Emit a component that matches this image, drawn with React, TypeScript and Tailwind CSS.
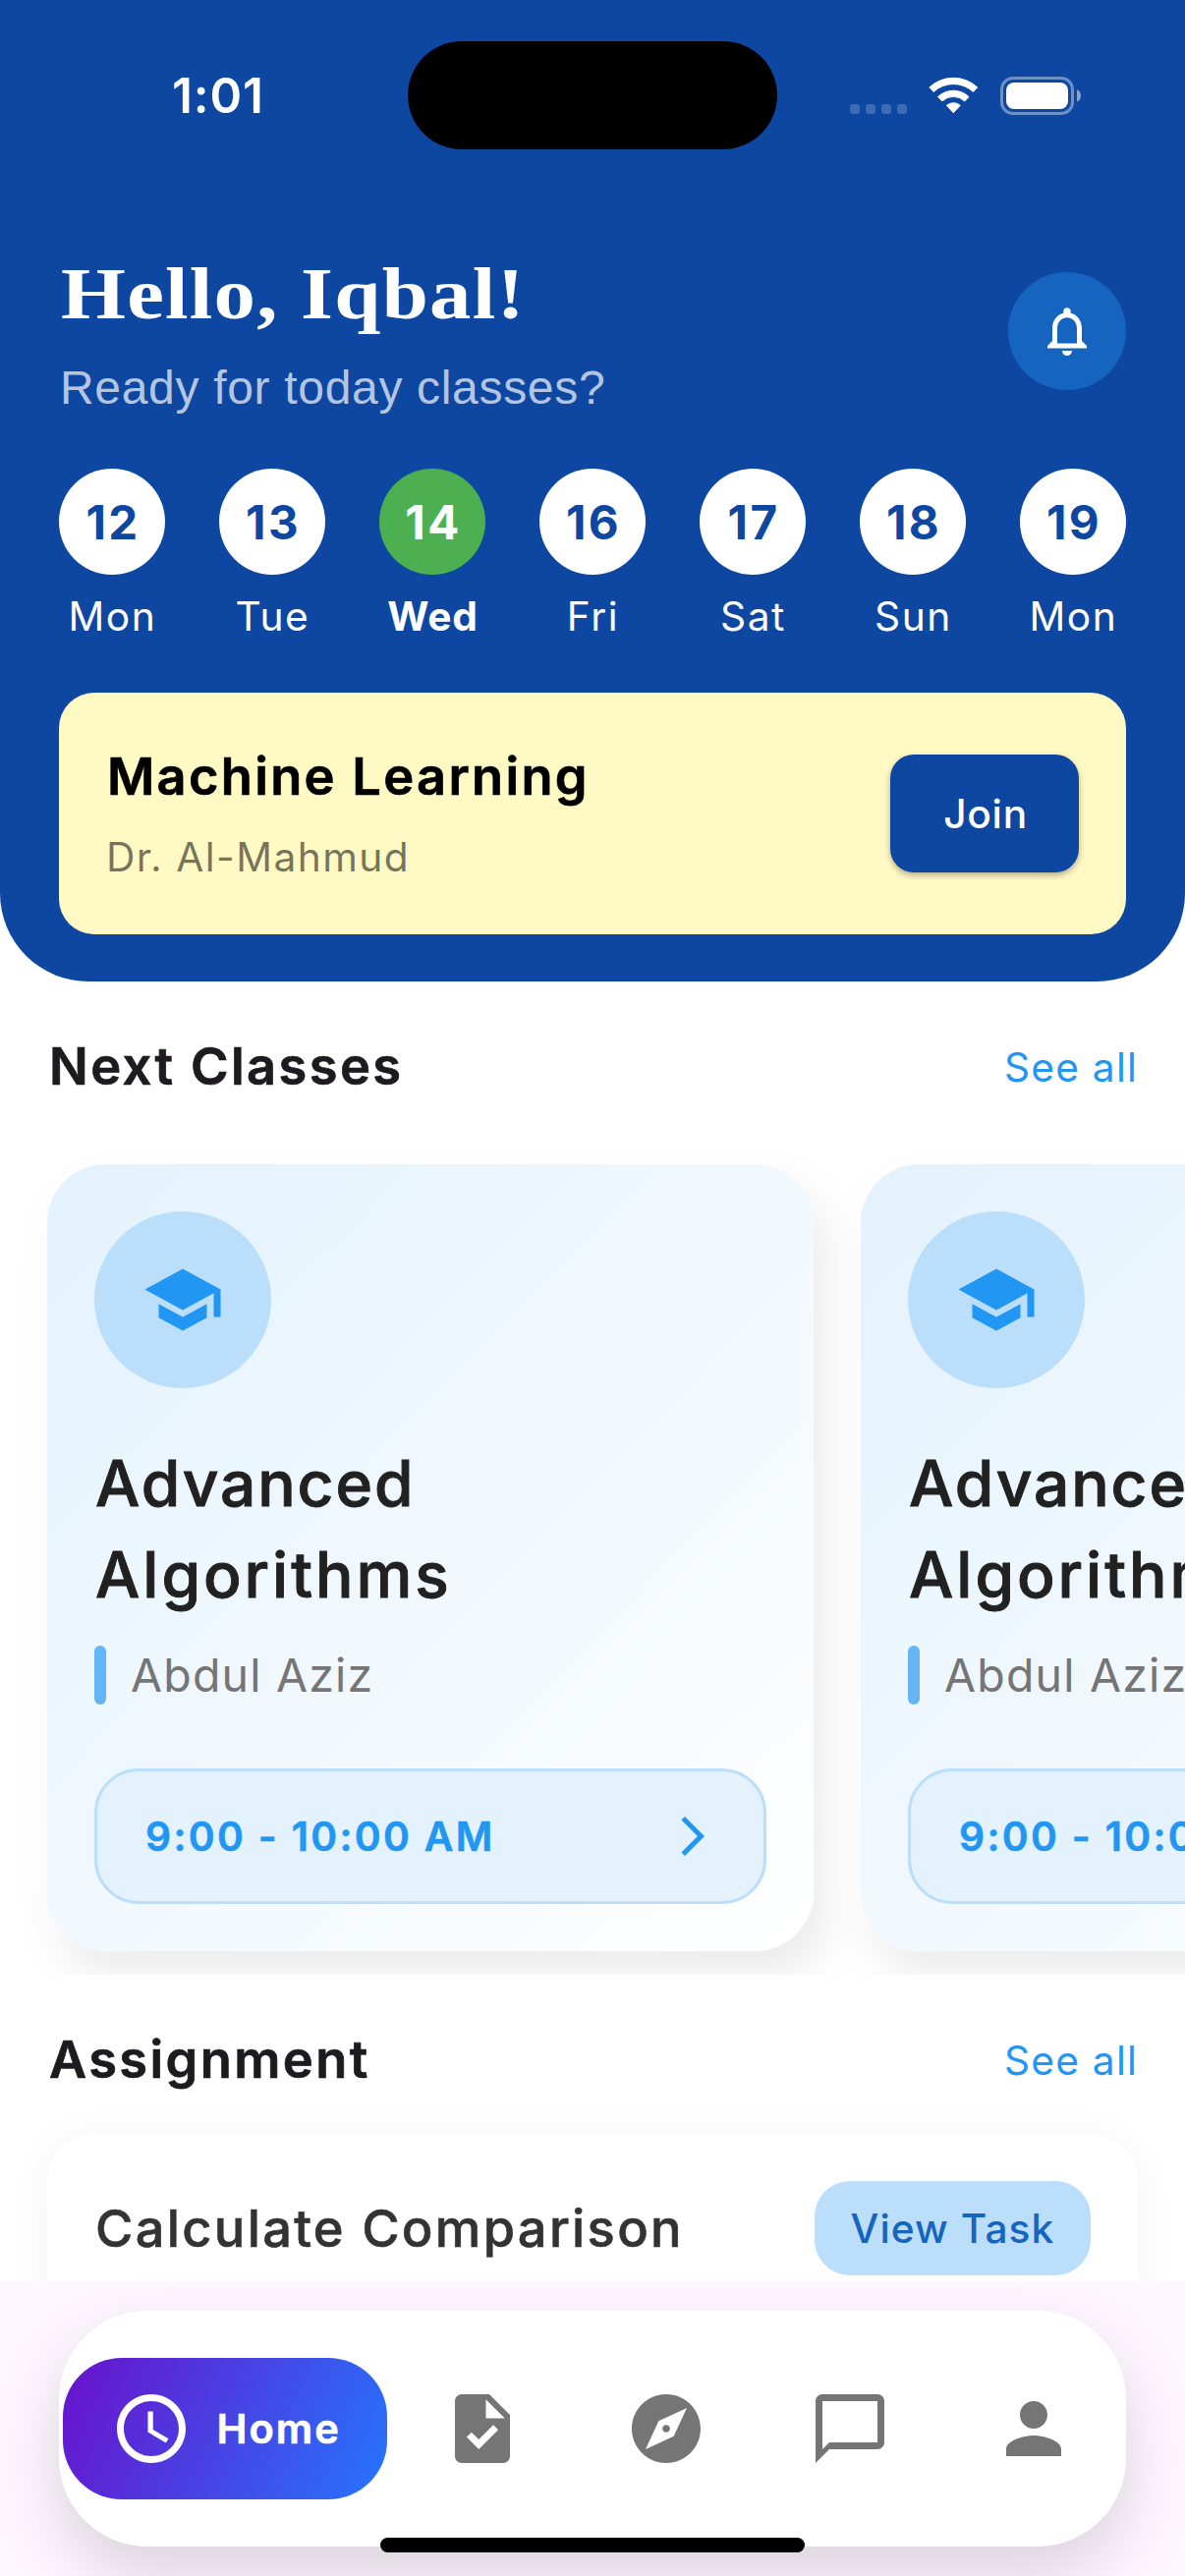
import {
  MdAccessTime,
  MdArrowForwardIos,
  MdChatBubbleOutline,
  MdExplore,
  MdNotificationsNone,
  MdPerson,
  MdSchool,
  MdTask,
} from 'react-icons/md';

const days = [
  { date: '12', day: 'Mon' },
  { date: '13', day: 'Tue' },
  { date: '14', day: 'Wed', active: true },
  { date: '16', day: 'Fri' },
  { date: '17', day: 'Sat' },
  { date: '18', day: 'Sun' },
  { date: '19', day: 'Mon' },
];

const tabs = [
  { label: 'Tasks', Icon: MdTask },
  { label: 'Explore', Icon: MdExplore },
  { label: 'Messages', Icon: MdChatBubbleOutline },
  { label: 'Profile', Icon: MdPerson },
];

function StatusBar() {
  return (
    <div className="flex h-[194px] items-center text-white">
      <div className="w-[415px] pl-[175px] pt-[2px] text-[49.5px] font-semibold leading-none tracking-[0.88px]">1:01</div>
      <div className="h-[110px] w-[376px] rounded-full bg-black" />
      <div className="flex flex-1 items-center pl-[74px]">
        <div className="flex h-[38px] items-end gap-[6px]">
          <span className="size-[10px] rounded-[3px] bg-white/20" />
          <span className="size-[10px] rounded-[3px] bg-white/20" />
          <span className="size-[10px] rounded-[3px] bg-white/20" />
          <span className="size-[10px] rounded-[3px] bg-white/20" />
        </div>
        <svg width="51" height="38" viewBox="0 0 51 38" className="ml-[22px]" fill="currentColor" stroke="currentColor" strokeWidth="1" strokeLinejoin="round">
          <path d="M0.9 10.9A35.9 35.9 0 0 1 49.7 10.9L45.4 15.4A29.7 29.7 0 0 0 5.2 15.4Z" />
          <path d="M9.5 20.6A22.8 22.8 0 0 1 41.1 20.6L36.7 24.9A16.6 16.6 0 0 0 13.9 24.9Z" />
          <path d="M18.4 29.3A10.5 10.5 0 0 1 32.2 29.3L25.3 36.8Z" />
        </svg>
        <svg width="83" height="39" viewBox="0 0 83 39" className="ml-[22px]">
          <rect x="1.5" y="1.5" width="72" height="36" rx="11.5" fill="none" stroke="white" strokeOpacity="0.4" strokeWidth="3" />
          <rect x="6" y="6" width="63" height="27" rx="8" fill="white" />
          <path d="M78 13.2C80.6 14.2 82 16.7 82 19.4S80.6 24.6 78 25.6Z" fill="white" fillOpacity="0.5" />
        </svg>
      </div>
    </div>
  );
}

function Header() {
  return (
    <header className="rounded-b-[90px] bg-[#0D47A1] pb-12 text-white">
      <StatusBar />
      <div className="mt-[63px] flex items-start justify-between px-[60px]">
        <div>
          <h1 className="ml-[2px] origin-left scale-x-[1.13] whitespace-nowrap font-['Liberation_Serif',serif] text-[75px] font-bold leading-[84px] tracking-[1.1px]">
            Hello, Iqbal!
          </h1>
          <p className="ml-px mt-[25px] whitespace-nowrap font-['Liberation_Sans',sans-serif] text-[48px] leading-[58px] tracking-[0.68px] text-white/70">
            Ready for today classes?
          </p>
        </div>
        <button aria-label="Notifications" className="mt-5 flex size-[120px] items-center justify-center rounded-full bg-[#1565C0]">
          <MdNotificationsNone className="size-[60px]" />
        </button>
      </div>

      <div className="mt-[53px] flex justify-between px-[60px]">
        {days.map(({ date, day, active }, i) => (
          <div key={i} className="flex w-[108px] flex-col items-center">
            <div
              className={`flex size-[108px] items-center justify-center rounded-full pl-[2px] pt-[2px] text-[47.5px] font-bold tracking-[2.4px] ${
                active ? 'bg-[#4CAF50] text-white' : 'bg-white text-[#0D47A1]'
              }`}
            >
              {date}
            </div>
            <div
              className={`mt-[15px] h-14 whitespace-nowrap pl-px text-[40.7px] leading-[56px] ${
                active ? 'font-bold tracking-[0.8px]' : 'tracking-[1.6px]'
              }`}
            >
              {day}
            </div>
          </div>
        ))}
      </div>

      <div className="mx-[60px] mt-[49px] flex h-[246px] items-center justify-between rounded-[36px] bg-[#FFF9C4] px-12">
        <div>
          <h2 className="ml-px text-[52.4px] font-semibold leading-[64px] tracking-[2.3px] text-black [-webkit-text-stroke:0.7px]">
            Machine Learning
          </h2>
          <p className="mt-[26px] text-[40.7px] leading-[50px] tracking-[1.46px] text-black/54">Dr. Al-Mahmud</p>
        </div>
        <button className="h-[120px] w-[192px] rounded-3xl bg-[#0D47A1] pl-[2px] pt-px text-[40.7px] font-medium tracking-[0.76px] shadow-[0_3px_6px_rgba(0,0,0,0.3)]">
          Join
        </button>
      </div>
    </header>
  );
}

function SectionHeader({ title }: { title: string }) {
  return (
    <div className="flex h-[162px] items-center justify-between px-12 pt-[10px]">
      <h2 className="ml-[2px] text-[52.4px] font-semibold leading-[64px] tracking-[2.4px] text-[#1D1B20] [-webkit-text-stroke:0.7px]">
        {title}
      </h2>
      <a className="pt-[3px] text-[40.7px] leading-[50px] tracking-[1.2px] text-[#2196F3]">See all</a>
    </div>
  );
}

function ClassCard() {
  return (
    <article className="h-[801px] w-[780px] shrink-0 rounded-[60px] bg-[linear-gradient(to_bottom_right,#E3F2FD,#FFFFFF)] p-12 shadow-[-12px_-12px_30px_rgba(255,255,255,0.6),12px_24px_48px_rgba(0,0,0,0.085)]">
      <div className="flex size-[180px] items-center justify-center rounded-full bg-[#BBDEFB]">
        <MdSchool className="size-[84px] text-[#2196F3]" />
      </div>
      <h3 className="ml-px mt-[50px] text-[64px] font-medium leading-[93px] text-[#212121] [-webkit-text-stroke:0.9px]">
        <span className="block tracking-[1.9px]">Advanced</span>
        <span className="block tracking-[2.95px]">Algorithms</span>
      </h3>
      <div className="mt-[26px] flex h-[60px] items-center gap-[25px]">
        <span className="h-[60px] w-3 rounded-full bg-[#64B5F6]" />
        <span className="pt-[2px] text-[46.5px] tracking-[1.18px] text-[#757575]">Abdul Aziz</span>
      </div>
      <div className="mt-[65px] flex h-[138px] items-center justify-between rounded-[45px] border-[3px] border-[#BBDEFB] bg-[#E3F2FD] px-12 text-[#2196F3]">
        <span className="pl-px pt-px text-[40.7px] font-semibold tracking-[2.36px] [-webkit-text-stroke:0.6px]">9:00 - 10:00 AM</span>
        <MdArrowForwardIos className="size-12" />
      </div>
    </article>
  );
}

function AssignmentCard() {
  return (
    <article className="mx-12 h-[300px] rounded-[48px] bg-white p-12 shadow-[0_6px_42px_rgba(0,0,0,0.055)]">
      <div className="flex h-24 items-center justify-between">
        <h3 className="ml-px text-[52.4px] font-medium leading-[64px] tracking-[2.3px] text-[#333333] [-webkit-text-stroke:0.6px]">
          Calculate Comparison
        </h3>
        <button className="h-24 w-[281px] rounded-[36px] bg-[#BBDEFB] pt-px text-[40.7px] font-medium tracking-[1.06px] text-[#1565C0]">
          View Task
        </button>
      </div>
    </article>
  );
}

function BottomNav() {
  return (
    <div className="relative h-[300px] bg-[#FEF7FF] px-[60px] pt-[30px]">
      <nav className="flex h-[240px] items-center justify-around rounded-[90px] bg-white shadow-[0_30px_72px_rgba(0,0,0,0.15)]">
        <button className="flex h-36 w-[330px] items-center gap-[25px] rounded-[60px] bg-[linear-gradient(113.6deg,#6A11CB,#2575FC)] pl-12 text-white">
          <MdAccessTime className="size-[84px] shrink-0" />
          <span className="pt-px text-[41.5px] font-semibold tracking-[2px] [-webkit-text-stroke:0.7px]">Home</span>
        </button>
        {tabs.map(({ label, Icon }) => (
          <button key={label} aria-label={label} className="flex h-36 w-[180px] items-center justify-center text-[#757575]">
            <Icon className="size-[84px]" />
          </button>
        ))}
      </nav>
      <div className="absolute bottom-6 left-[387px] h-[15px] w-[432px] rounded-full bg-black" />
    </div>
  );
}

export default function App() {
  return (
    <div className="flex h-[2622px] w-[1206px] flex-col overflow-hidden bg-white font-['Inter',sans-serif]">
      <main className="h-[2322px] overflow-hidden">
        <Header />
        <SectionHeader title="Next Classes" />
        <div className="flex gap-12 overflow-hidden py-6 pl-12">
          <ClassCard />
          <ClassCard />
        </div>
        <SectionHeader title="Assignment" />
        <AssignmentCard />
      </main>
      <BottomNav />
    </div>
  );
}
